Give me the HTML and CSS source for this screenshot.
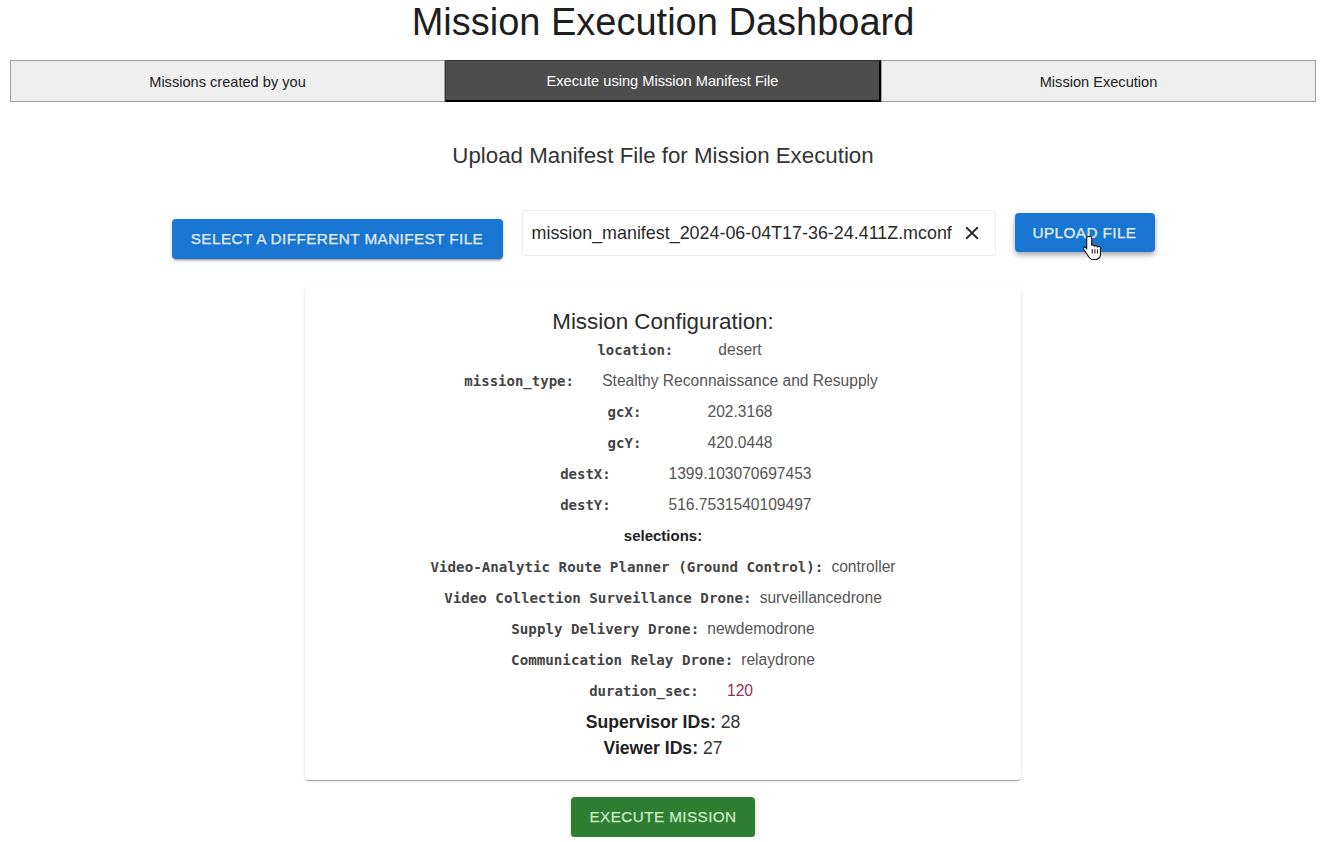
FILE: index.html
```html
<!DOCTYPE html>
<html lang="en">
<head>
<meta charset="utf-8">
<title>Mission Execution Dashboard</title>
<link rel="stylesheet" href="styles.css">
</head>
<body>
<div class="page">
  <h1 class="title">Mission Execution Dashboard</h1>
  <nav class="tabs">
    <button class="tab">Missions created by you</button>
    <button class="tab active">Execute using Mission Manifest File</button>
    <button class="tab">Mission Execution</button>
  </nav>

  <h2 class="subtitle">Upload Manifest File for Mission Execution</h2>

  <div class="upload-row">
    <button class="btn btn-blue btn-select">Select a different manifest file</button>
    <div class="file-box">
      <span class="file-name">mission_manifest_2024-06-04T17-36-24.411Z.mconf</span>
      <svg class="close-icon" viewBox="0 0 24 24" width="22" height="22"><path d="M19 6.41 17.59 5 12 10.59 6.41 5 5 6.41 10.59 12 5 17.59 6.41 19 12 13.41 17.59 19 19 17.59 13.41 12z" fill="#222"/></svg>
    </div>
    <div class="upload-wrap">
      <button class="btn btn-blue btn-upload">Upload file</button>
      <svg class="cursor" viewBox="0 0 18 26" width="18" height="26">
        <path d="M5.5 1.5c-1 0-1.8.8-1.8 1.8v10.6l-1.3-1.4c-.7-.7-1.8-.8-2-.1-.3.5-.1 1.2.3 1.8l3.7 5.6c1 1.6 2.6 4.7 5.6 4.7h2.6c2.8 0 4.9-2.3 4.9-5.1v-6.1c0-1-.8-1.8-1.7-1.8-.5 0-.9.2-1.2.5-.2-.8-.9-1.4-1.8-1.4-.5 0-1 .2-1.3.6-.3-.7-.9-1.2-1.7-1.2-.4 0-.8.1-1.1.3V3.3c0-1-.8-1.8-1.8-1.8z" fill="#fff" stroke="#111" stroke-width="1.1" stroke-linejoin="round"/>
        <path d="M9.2 14v4.5M11.9 14.2v4.3M14.6 14.4v4.1" stroke="#111" stroke-width="1" fill="none"/>
      </svg>
    </div>
  </div>

  <section class="card">
    <h3 class="card-title">Mission Configuration:</h3>
    <div class="kv"><code class="k">location:</code><span class="v">desert</span></div>
    <div class="kv"><code class="k">mission_type:</code><span class="v">Stealthy Reconnaissance and Resupply</span></div>
    <div class="kv"><code class="k">gcX:</code><span class="v">202.3168</span></div>
    <div class="kv"><code class="k">gcY:</code><span class="v">420.0448</span></div>
    <div class="kv"><code class="k">destX:</code><span class="v">1399.103070697453</span></div>
    <div class="kv"><code class="k">destY:</code><span class="v">516.7531540109497</span></div>
    <div class="sel-head">selections:</div>
    <div class="sel"><code class="k2">Video-Analytic Route Planner (Ground Control):</code> <span class="v">controller</span></div>
    <div class="sel"><code class="k2">Video Collection Surveillance Drone:</code> <span class="v">surveillancedrone</span></div>
    <div class="sel"><code class="k2">Supply Delivery Drone:</code> <span class="v">newdemodrone</span></div>
    <div class="sel"><code class="k2">Communication Relay Drone:</code> <span class="v">relaydrone</span></div>
    <div class="kv"><code class="k">duration_sec:</code><span class="v num">120</span></div>
    <div class="ids">
      <div><b>Supervisor IDs:</b> 28</div>
      <div><b>Viewer IDs:</b> 27</div>
    </div>
  </section>

  <div class="exec-row">
    <button class="btn btn-green">Execute Mission</button>
  </div>
</div>
</body>
</html>
```
FILE: styles.css
```css
* { box-sizing: border-box; }
html, body { margin: 0; padding: 0; background: #fff; }
body {
  font-family: "Liberation Sans", Arial, sans-serif;
  color: #222;
}
.page {
  padding: 0 10px;
}
.title {
  margin: 0;
  height: 46px;
  padding-top: 2px;
  font-family: "Liberation Sans", Arial, sans-serif;
  font-weight: 400;
  font-size: 38px;
  line-height: 40px;
  text-align: center;
  color: #1e1e1e;
}
.tabs {
  margin-top: 14px;
  display: flex;
  height: 42px;
}
.tab {
  flex: 1;
  padding-top: 2px;
  font-family: "Liberation Sans", Arial, sans-serif;
  font-size: 14.6px;
  color: #222;
  background: #efefef;
  border: 1px solid #a0a0a0;
  cursor: pointer;
}
.tab.active {
  background: #4d4d4d;
  color: #fff;
  border: 1px solid #333;
  border-right: 2px solid #000;
  border-bottom: 2px solid #000;
}
.subtitle {
  margin: 0;
  padding-top: 41px;
  height: 108px;
  font-weight: 400;
  font-size: 22.3px;
  line-height: 26px;
  text-align: center;
  color: #333;
}
.upload-row {
  display: flex;
  justify-content: center;
  align-items: flex-start;
  gap: 19px;
}
.btn {
  font-family: "Liberation Sans", Arial, sans-serif;
  font-weight: 400;
  font-size: 15.3px;
  text-transform: uppercase;
  letter-spacing: 0.4px;
  border: none;
  border-radius: 4px;
  cursor: pointer;
  color: #fff;
  -webkit-text-stroke: 0.25px currentColor;
}
.btn-blue {
  background: #1976d2;
  color: #e6eefa;
  box-shadow: 0 3px 1px -2px rgba(0,0,0,.2), 0 2px 2px 0 rgba(0,0,0,.14), 0 1px 5px 0 rgba(0,0,0,.12);
}
.btn-select {
  margin-top: 9px;
  width: 331px;
  height: 40px;
}
.file-box {
  width: 474px;
  height: 46px;
  display: flex;
  align-items: center;
  justify-content: space-between;
  padding: 0 12px 0 9px;
  border: 1px solid #ececec;
  border-radius: 3px;
  background: #fff;
}
.file-name {
  font-size: 17.9px;
  color: #2a2a2a;
  white-space: nowrap;
}
.close-icon { display: block; flex: none; }
.upload-wrap {
  position: relative;
  margin-top: 3px;
}
.btn-upload {
  width: 140px;
  height: 39px;
  box-shadow: 0 2px 4px -1px rgba(0,0,0,.2), 0 4px 5px 0 rgba(0,0,0,.14), 0 1px 10px 0 rgba(0,0,0,.12);
}
.cursor {
  position: absolute;
  left: 68px;
  top: 22px;
}
.card {
  width: 716px;
  margin: 28px auto 0;
  padding: 22px 16px 19px;
  background: #fff;
  border-radius: 4px;
  box-shadow: 0 2px 1px -1px rgba(0,0,0,.2), 0 1px 1px 0 rgba(0,0,0,.14), 0 1px 3px 0 rgba(0,0,0,.12);
}
.card-title {
  margin: 0;
  font-weight: 400;
  font-size: 22.4px;
  line-height: 25px;
  text-align: center;
  color: #2b2b2b;
}
.kv, .sel, .sel-head {
  height: 31px;
  display: flex;
  justify-content: center;
  align-items: center;
}
.k, .k2 {
  font-family: "DejaVu Sans Mono", monospace;
  font-size: 14px;
  font-weight: 700;
  color: #444;
}
.k {
  width: 154px;
  text-align: center;
}
.k2 { margin-right: 8px; font-size: 14.2px; }
.v {
  font-family: "Liberation Sans", Arial, sans-serif;
  font-size: 15.6px;
  color: #555;
}
.kv .v { padding: 0 6px; }
.v.num { color: #8e3450; }
.sel-head {
  font-weight: 700;
  font-size: 15px;
  color: #222;
}
.ids {
  margin-top: 3px;
  text-align: center;
  font-size: 17.6px;
  line-height: 26px;
  color: #333;
}
.ids b { color: #222; }
.exec-row {
  display: flex;
  justify-content: center;
  padding-top: 17px;
}
.btn-green {
  width: 184px;
  height: 40px;
  background: #2e7d32;
  color: #c9ecc9;
  box-shadow: 0 3px 1px -2px rgba(0,0,0,.2), 0 2px 2px 0 rgba(0,0,0,.14), 0 1px 5px 0 rgba(0,0,0,.12);
}
```
